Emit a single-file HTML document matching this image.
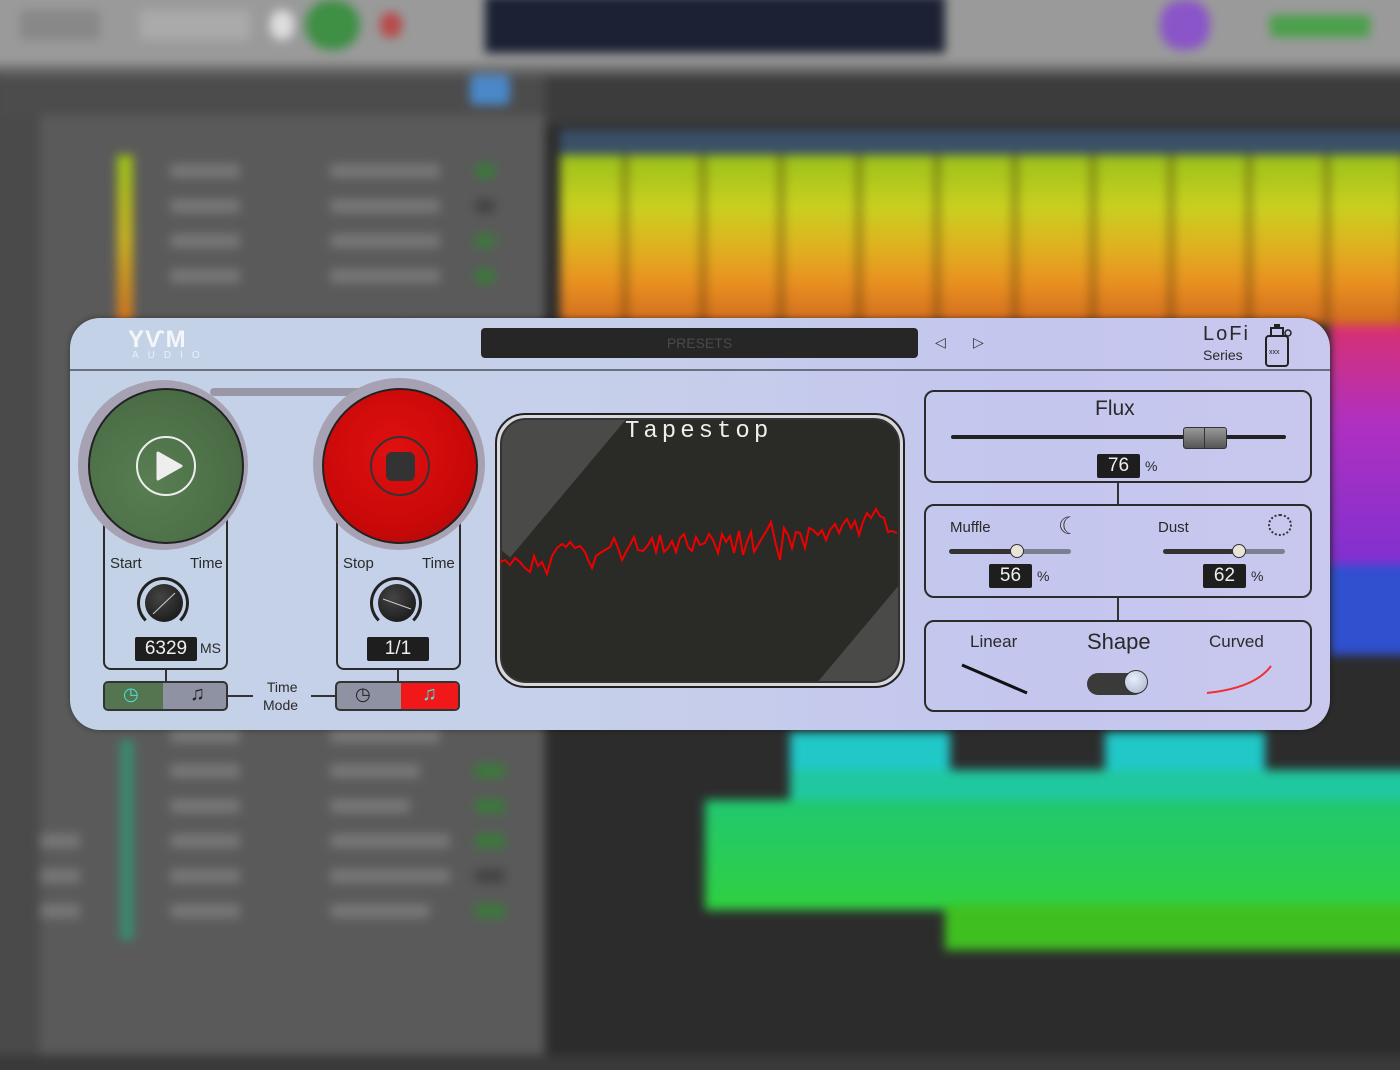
<!DOCTYPE html>
<html><head><meta charset="utf-8"><style>
*{margin:0;padding:0;box-sizing:border-box}
body{width:1400px;height:1050px;overflow:hidden;position:relative;background:#3a3a3a;font-family:"Liberation Sans",sans-serif}
.a{position:absolute}
#bg{position:absolute;inset:-20px;filter:blur(5px)}
.hand{font-family:"Comic Sans MS","Liberation Sans",sans-serif;color:#2a2a2a}
.box{position:absolute;border:2px solid #2b2b2b;border-radius:10px}
.num{position:absolute;background:#1e1e1e;color:#eee;font-size:19px;text-align:center;line-height:24px;border-radius:2px}
.row{position:absolute;left:40px;width:520px;height:22px}
.row i{position:absolute;top:4px;height:14px;border-radius:3px;background:#777}
</style></head><body>
<div id="bg">
 <div class="a" style="left:0;top:0;width:1440px;height:95px;background:#9a9a9a"></div>
 <div class="a" style="left:0;top:85px;width:1440px;height:10px;background:#6a6a6a"></div>
 <div class="a" style="left:505px;top:15px;width:460px;height:58px;background:#1c2233"></div>
 <div class="a" style="left:40px;top:30px;width:80px;height:30px;background:#888;border-radius:4px"></div>
 <div class="a" style="left:160px;top:30px;width:110px;height:30px;background:#aaa;border-radius:4px"></div>
 <div class="a" style="left:325px;top:20px;width:55px;height:50px;border-radius:25px;background:#3f8f45"></div>
 <div class="a" style="left:400px;top:32px;width:22px;height:26px;border-radius:12px;background:#b94a4a"></div>
 <div class="a" style="left:290px;top:30px;width:24px;height:30px;border-radius:12px;background:#ddd"></div>
 <div class="a" style="left:1180px;top:20px;width:50px;height:50px;border-radius:22px;background:#8a55c8"></div>
 <div class="a" style="left:1290px;top:35px;width:100px;height:22px;background:#4aa04a"></div>
 <div class="a" style="left:0;top:95px;width:565px;height:980px;background:#5a5a5a"></div>
 <div class="a" style="left:0;top:95px;width:60px;height:980px;background:#4a4a4a"></div>
 <div class="a" style="left:20px;top:95px;width:545px;height:40px;background:#4c4c4c"></div>
 <div class="a" style="left:490px;top:95px;width:40px;height:30px;background:#4a88c8;border-radius:6px"></div>
 <div class="a" style="left:640px;top:95px;width:40px;height:30px;background:#4a88c8;border-radius:6px"></div>
 <div class="a" style="left:565px;top:95px;width:880px;height:980px;background:#2c2c2c"></div>
 <div class="a" style="left:565px;top:95px;width:880px;height:50px;background:#3c3c3c"></div>
 <div class="a" style="left:580px;top:150px;width:860px;height:25px;background:#3a5068"></div>
 <div class="a" style="left:580px;top:175px;width:860px;height:170px;background:linear-gradient(#9ac01a,#c8d020 30%,#e0b020 55%,#e89020 75%,#d06a20)"></div>
 <div class="a" style="left:580px;top:175px;width:860px;height:170px;background:repeating-linear-gradient(90deg,transparent 0 62px,rgba(60,40,0,.45) 62px 68px,transparent 68px 78px)"></div>
 <div class="a" style="left:137px;top:175px;width:16px;height:170px;background:linear-gradient(#9ac01a,#c8b020,#d07020)"></div>
 <div class="row" style="top:180px"><i style="left:150px;width:70px"></i><i style="left:310px;width:110px"></i><i style="left:455px;width:20px;background:#3a7a3a"></i></div>
 <div class="row" style="top:215px"><i style="left:150px;width:70px"></i><i style="left:310px;width:110px"></i><i style="left:455px;width:20px;background:#444"></i></div>
 <div class="row" style="top:250px"><i style="left:150px;width:70px"></i><i style="left:310px;width:110px"></i><i style="left:455px;width:20px;background:#3a7a3a"></i></div>
 <div class="row" style="top:285px"><i style="left:150px;width:70px"></i><i style="left:310px;width:110px"></i><i style="left:455px;width:20px;background:#3a7a3a"></i></div>
 <div class="row" style="top:745px"><i style="left:150px;width:70px"></i><i style="left:310px;width:110px"></i></div>
 <div class="row" style="top:780px"><i style="left:150px;width:70px"></i><i style="left:310px;width:90px"></i><i style="left:455px;width:30px;background:#3a7a3a"></i></div>
 <div class="row" style="top:815px"><i style="left:150px;width:70px"></i><i style="left:310px;width:80px"></i><i style="left:455px;width:30px;background:#3a7a3a"></i></div>
 <div class="row" style="top:850px"><i style="left:20px;width:40px"></i><i style="left:150px;width:70px"></i><i style="left:310px;width:120px"></i><i style="left:455px;width:30px;background:#3a7a3a"></i></div>
 <div class="row" style="top:885px"><i style="left:20px;width:40px"></i><i style="left:150px;width:70px"></i><i style="left:310px;width:120px"></i><i style="left:455px;width:30px;background:#444"></i></div>
 <div class="row" style="top:920px"><i style="left:20px;width:40px"></i><i style="left:150px;width:70px"></i><i style="left:310px;width:100px"></i><i style="left:455px;width:30px;background:#3a7a3a"></i></div>
 <div class="a" style="left:1350px;top:345px;width:90px;height:240px;background:linear-gradient(#d83070,#b030c0 40%,#8030d0)"></div>
 <div class="a" style="left:1350px;top:585px;width:90px;height:90px;background:#3050d0"></div>
 <div class="a" style="left:810px;top:752px;width:160px;height:55px;background:#20c8c8"></div>
 <div class="a" style="left:1125px;top:752px;width:160px;height:55px;background:#20c8c8"></div>
 <div class="a" style="left:810px;top:790px;width:630px;height:40px;background:#20c8a0"></div>
 <div class="a" style="left:725px;top:820px;width:715px;height:110px;background:linear-gradient(#20c870,#30d040)"></div>
 <div class="a" style="left:965px;top:925px;width:475px;height:45px;background:#40c020"></div>
 <div class="a" style="left:140px;top:760px;width:14px;height:200px;background:#3a8a70"></div>
</div>

<!-- plugin -->
<div class="a" style="left:70px;top:318px;width:1260px;height:412px;border-radius:30px;background:linear-gradient(90deg,#c3d2e6,#c6d0ea 40%,#c4c6ee 75%,#c9c8ef);box-shadow:0 0 6px rgba(0,0,0,.4)"></div>
<div class="a" style="left:70px;top:369px;width:1260px;height:2px;background:#6a7080"></div>
<div class="a" style="left:128px;top:326px;font-weight:bold;font-size:24px;color:#f4f6fa;letter-spacing:1px">YѴM</div>
<div class="a" style="left:132px;top:350px;font-size:10px;color:#eef;letter-spacing:9px">AUDIO</div>
<div class="a" style="left:481px;top:328px;width:437px;height:30px;border-radius:4px;background:#262626;color:#4a4a4a;font-size:14px;text-align:center;line-height:30px">PRESETS</div>
<div class="a" style="left:935px;top:334px;font-size:14px;color:#333">◁</div>
<div class="a" style="left:973px;top:334px;font-size:14px;color:#333">▷</div>
<div class="a hand" style="left:1203px;top:323px;font-size:20px;letter-spacing:2px">LoFi</div>
<div class="a hand" style="left:1203px;top:347px;font-size:14px">Series</div>
<svg class="a" style="left:1262px;top:322px" width="32" height="46"><rect x="4" y="14" width="22" height="30" rx="3" fill="none" stroke="#222" stroke-width="2"/><rect x="9" y="6" width="12" height="8" fill="none" stroke="#222" stroke-width="2"/><rect x="12" y="2" width="6" height="5" fill="#222"/><circle cx="26" cy="11" r="3" fill="none" stroke="#222" stroke-width="1.5"/><text x="7" y="32" font-size="7" fill="#222">xxx</text></svg>

<div class="a" style="left:210px;top:388px;width:160px;height:8px;background:#9a98a8;border-radius:4px"></div>
<div class="box" style="left:103px;top:510px;width:125px;height:160px;border-radius:8px"></div>
<div class="a" style="left:78px;top:380px;width:170px;height:170px;border-radius:50%;background:#a6a2b4"></div>
<div class="a" style="left:88px;top:388px;width:156px;height:156px;border-radius:50%;background:radial-gradient(circle at 40% 60%,#587e52,#4a6c45 70%,#3e5a3a);border:2px solid #222"></div>
<div class="a" style="left:136px;top:436px;width:60px;height:60px;border-radius:50%;border:2px solid #eee"></div>
<svg class="a" style="left:155px;top:451px" width="30" height="30"><path d="M3 2 L26 15 L3 28 Z" fill="#eee" stroke="#eee" stroke-width="3" stroke-linejoin="round"/></svg>
<div class="a hand" style="left:110px;top:555px;font-size:15px">Start</div>
<div class="a hand" style="left:190px;top:555px;font-size:15px">Time</div>
<div class="a" style="left:137px;top:577px;width:52px;height:52px;border-radius:50%;border:3px solid #222;border-bottom-color:transparent"></div>
<div class="a" style="left:145px;top:584px;width:38px;height:38px;border-radius:50%;background:radial-gradient(circle at 40% 35%,#444,#111)"></div>
<svg class="a" style="left:145px;top:584px" width="38" height="38"><line x1="8" y1="30" x2="30" y2="9" stroke="#ccc" stroke-width="1"/></svg>
<div class="num" style="left:135px;top:637px;width:62px">6329</div>
<div class="a hand" style="left:200px;top:640px;font-size:14px">MS</div>
<div class="a" style="left:165px;top:670px;width:2px;height:12px;background:#333"></div>
<div class="a" style="left:103px;top:681px;width:125px;height:30px;border-radius:5px;border:2px solid #333;background:#8e92a2;overflow:hidden"><div style="width:58px;height:100%;background:#537550"></div></div>
<div class="a" style="left:123px;top:684px;color:#4ce0e0;font-size:18px">◷</div>
<div class="a" style="left:190px;top:683px;color:#222;font-size:20px">♫</div>
<div class="a" style="left:228px;top:695px;width:25px;height:2px;background:#333"></div>
<div class="a hand" style="left:263px;top:678px;font-size:14px;line-height:18px">&nbsp;Time<br>Mode</div>
<div class="a" style="left:311px;top:695px;width:25px;height:2px;background:#333"></div>

<div class="box" style="left:336px;top:510px;width:125px;height:160px;border-radius:8px"></div>
<div class="a" style="left:313px;top:378px;width:172px;height:172px;border-radius:50%;background:#a6a2b4"></div>
<div class="a" style="left:322px;top:388px;width:156px;height:156px;border-radius:50%;background:radial-gradient(circle at 45% 40%,#e01010,#c80808 65%,#961010);border:2px solid #222"></div>
<div class="a" style="left:370px;top:436px;width:60px;height:60px;border-radius:50%;border:2px solid #333"></div>
<div class="a" style="left:386px;top:452px;width:29px;height:29px;border-radius:6px;background:#333"></div>
<div class="a hand" style="left:343px;top:555px;font-size:15px">Stop</div>
<div class="a hand" style="left:422px;top:555px;font-size:15px">Time</div>
<div class="a" style="left:370px;top:577px;width:52px;height:52px;border-radius:50%;border:3px solid #222;border-bottom-color:transparent"></div>
<div class="a" style="left:378px;top:584px;width:38px;height:38px;border-radius:50%;background:radial-gradient(circle at 40% 35%,#444,#111)"></div>
<svg class="a" style="left:378px;top:584px" width="38" height="38"><line x1="5" y1="15" x2="33" y2="25" stroke="#ccc" stroke-width="1"/></svg>
<div class="num" style="left:367px;top:637px;width:62px">1/1</div>
<div class="a" style="left:397px;top:670px;width:2px;height:12px;background:#333"></div>
<div class="a" style="left:335px;top:681px;width:125px;height:30px;border-radius:5px;border:2px solid #333;background:#8e92a2;overflow:hidden"><div style="position:absolute;left:64px;width:61px;height:100%;background:#f01818"></div></div>
<div class="a" style="left:355px;top:684px;color:#222;font-size:18px">◷</div>
<div class="a" style="left:422px;top:683px;color:#4ce0e0;font-size:20px">♫</div>

<div class="a" style="left:495px;top:413px;width:410px;height:275px;border-radius:30px;border:2px solid #222;background:#d8d8dc;padding:3px"><div style="width:100%;height:100%;border-radius:26px;border:2px solid #333;background:#2a2a26;overflow:hidden;position:relative">
<div style="position:absolute;left:-40px;top:-60px;width:120px;height:180px;background:#4a4a48;transform:rotate(40deg)"></div>
<div style="position:absolute;right:-40px;bottom:-80px;width:100px;height:170px;background:#4a4a48;transform:rotate(40deg)"></div>
</div></div>
<div class="a" style="left:625px;top:418px;font-family:'Comic Sans MS','Liberation Mono',monospace;font-size:24px;letter-spacing:4px;color:#eee">Tapestop</div>
<svg class="a" style="left:0;top:0" width="1400" height="1050"><polyline fill="none" stroke="#e00" stroke-width="2" points="500,562 505,560 510,565 515,558 520,562 525,568 530,572 534,556 538,566 542,562 547,574 552,556 557,548 562,544 566,547 570,542 575,548 580,546 585,552 588,560 592,568 596,556 600,553 605,550 610,547 614,538 618,548 622,560 626,552 630,545 634,537 638,550 643,551 648,545 652,538 656,552 660,535 664,552 668,548 672,541 676,552 680,538 684,534 688,547 692,551 696,537 700,545 705,543 709,534 713,540 718,553 722,534 726,542 730,536 734,553 739,531 743,555 747,542 751,532 754,552 758,545 762,538 767,530 771,522 776,545 780,560 784,528 788,535 792,548 796,532 800,533 805,548 809,528 813,530 818,535 822,530 826,540 830,530 835,524 839,533 843,524 847,519 851,528 855,521 859,535 863,522 867,513 871,518 876,509 880,516 884,518 888,532 892,531 897,533"/>
<line x1="962" y1="665" x2="1027" y2="693" stroke="#111" stroke-width="3"/>
<path d="M1207 693 Q1255 688 1271 666" fill="none" stroke="#f03030" stroke-width="2"/>
</svg>

<div class="box" style="left:924px;top:390px;width:388px;height:93px"></div>
<div class="a hand" style="left:1095px;top:397px;font-size:21px">Flux</div>
<div class="a" style="left:951px;top:435px;width:335px;height:4px;background:#222;border-radius:2px"></div>
<div class="a" style="left:1183px;top:427px;width:44px;height:22px;border-radius:3px;background:linear-gradient(#999,#555);border:1px solid #333"></div>
<div class="a" style="left:1204px;top:428px;width:1px;height:20px;background:#333"></div>
<div class="num" style="left:1097px;top:454px;width:43px">76</div>
<div class="a hand" style="left:1145px;top:458px;font-size:14px">%</div>
<div class="a" style="left:1117px;top:483px;width:2px;height:22px;background:#333"></div>
<div class="box" style="left:924px;top:504px;width:388px;height:94px"></div>
<div class="a hand" style="left:950px;top:519px;font-size:15px">Muffle</div>
<div class="a" style="left:1058px;top:512px;font-size:24px;color:#333">☾</div>
<div class="a hand" style="left:1158px;top:519px;font-size:15px">Dust</div>
<div class="a" style="left:1268px;top:514px;width:24px;height:22px;border:2px dotted #333;border-radius:50%"></div>
<div class="a" style="left:949px;top:549px;width:122px;height:5px;border-radius:3px;background:linear-gradient(90deg,#333 55%,#7a8090 55%)"></div>
<div class="a" style="left:1010px;top:544px;width:14px;height:14px;border-radius:50%;background:#e8e4d8;border:1px solid #333"></div>
<div class="num" style="left:989px;top:564px;width:43px">56</div>
<div class="a hand" style="left:1037px;top:568px;font-size:14px">%</div>
<div class="a" style="left:1163px;top:549px;width:122px;height:5px;border-radius:3px;background:linear-gradient(90deg,#333 62%,#7a8090 62%)"></div>
<div class="a" style="left:1232px;top:544px;width:14px;height:14px;border-radius:50%;background:#e8e4d8;border:1px solid #333"></div>
<div class="num" style="left:1203px;top:564px;width:43px">62</div>
<div class="a hand" style="left:1251px;top:568px;font-size:14px">%</div>
<div class="a" style="left:1117px;top:598px;width:2px;height:22px;background:#333"></div>
<div class="box" style="left:924px;top:620px;width:388px;height:92px"></div>
<div class="a hand" style="left:970px;top:632px;font-size:17px">Linear</div>
<div class="a hand" style="left:1087px;top:629px;font-size:22px">Shape</div>
<div class="a hand" style="left:1209px;top:632px;font-size:17px">Curved</div>
<div class="a" style="left:1087px;top:673px;width:58px;height:22px;border-radius:11px;background:#3a3a3a"></div>
<div class="a" style="left:1124px;top:670px;width:24px;height:24px;border-radius:50%;background:radial-gradient(circle at 40% 35%,#e8eefa,#a8b4cc);border:1px solid #333"></div>
</body></html>
